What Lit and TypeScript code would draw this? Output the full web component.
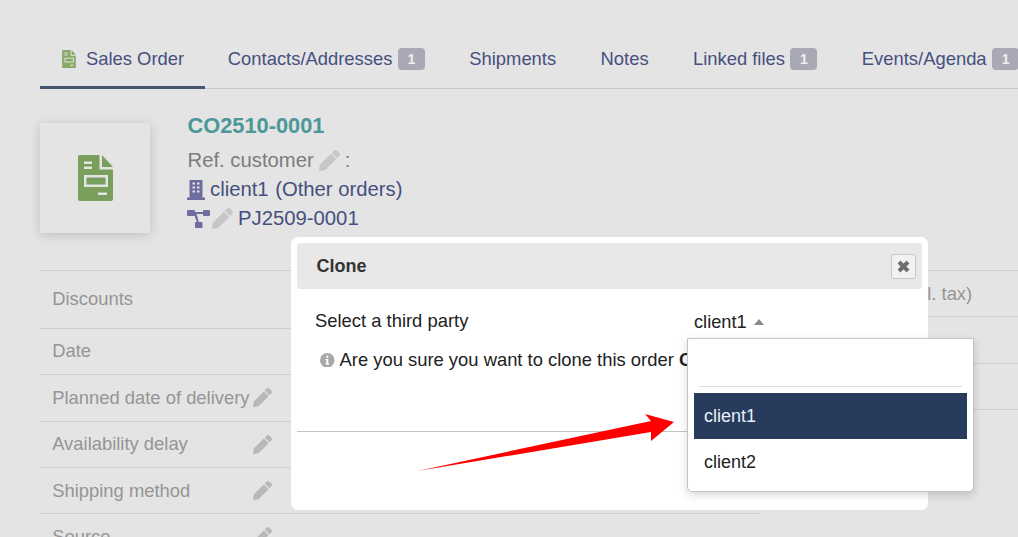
import { LitElement, html, css, svg } from "lit";
import { customElement } from "lit/decorators.js";

const pencilPath = "M497.9 142.1l-46.1 46.1c-4.7 4.7-12.3 4.7-17 0l-111-111c-4.7-4.7-4.7-12.3 0-17l46.1-46.1c18.7-18.7 49.1-18.7 67.9 0l60.1 60.1c18.8 18.7 18.8 49.1 0 67.9zM284.2 99.8L21.6 362.4.4 483.9c-2.9 16.4 11.4 30.6 27.8 27.8l121.5-21.3 262.6-262.6c4.7-4.7 4.7-12.3 0-17l-111-111c-4.8-4.7-12.4-4.7-17.1 0z";

const pencil = () => html`<svg class="pencil" viewBox="0 0 512 512"><path d=${pencilPath}></path></svg>`;

const docIcon = (cls: string) => html`<svg class=${cls} viewBox="0 0 35 46">
  <path fill-rule="evenodd" d="M2 0H21.5V14.5H35V44a2 2 0 0 1-2 2H2a2 2 0 0 1-2-2V2a2 2 0 0 1 2-2Z
    M6 6.5V9H14V6.5Z M6 11.5V14H14V11.5Z M20 37.5V40H29V37.5Z
    M6 20V32H30V20Z M8.5 22.5H27.5V29.5H8.5Z"></path>
  <path d="M24 0L35 12H24Z"></path>
</svg>`;

const buildingIcon = html`<svg class="ico-building" viewBox="0 0 18 20">
  <path fill-rule="evenodd" d="M2.5 0H15.5V17.5H18V20H0V17.5H2.5Z
    M5.5 2.5V4.5H8V2.5Z M10 2.5V4.5H12.5V2.5Z M5.5 6.5V8.5H8V6.5Z M10 6.5V8.5H12.5V6.5Z M5.5 10.5V12.5H8V10.5Z M10 10.5V12.5H12.5V10.5Z"></path>
</svg>`;

const projectIcon = html`<svg class="ico-project" viewBox="0 0 23 18">
  <rect x="0" y="0" width="8" height="6" rx="0.8"></rect>
  <rect x="16" y="0" width="7" height="6" rx="0.8"></rect>
  <rect x="8" y="12" width="7.5" height="6" rx="0.8"></rect>
  <path d="M7 2H17V4H9.6L12 12.5H10L7.4 5.5Z"></path>
</svg>`;

const arrow = svg`<polygon points="417.5,471 651,421 645,414 674,422 651,441 651,432" fill="#fe0000"></polygon>`;

const leftRows = [
  { label: "Discounts", cls: "tall up", edit: false },
  { label: "Date", cls: "up", edit: false },
  { label: "Planned date of delivery", cls: "", edit: true },
  { label: "Availability delay", cls: "", edit: true },
  { label: "Shipping method", cls: "down", edit: true },
  { label: "Source", cls: "", edit: true },
];

@customElement("app-root")
export class AppRoot extends LitElement {
  static styles = css`
    :host {
      display: block;
      position: relative;
      width: 1018px;
      height: 537px;
      overflow: hidden;
      background: #e4e4e4;
      font-family: "Liberation Sans", Arial, sans-serif;
      font-size: 18.4px;
      color: #222;
    }
    .page { padding: 40px 0 0 40px; white-space: nowrap; }
    .tabs {
      display: flex;
      height: 48px;
      border-bottom: 1px solid #c8c8c8;
      align-items: stretch;
    }
    .tab {
      display: flex;
      align-items: center;
      gap: 5.5px;
      padding: 0 22.2px 10px;
      color: #46507f;
      font-size: 18.4px;
      flex: none;
    }
    .tab.active {
      border-bottom: 3px solid #465670;
      margin-bottom: -1px;
      padding: 0 21px 8px 22px;
      gap: 10px;
    }
    .tab.lead { padding-left: 22.7px; }
    .ico-tab { width: 14px; height: 18px; fill: #8aa868; flex: none; }
    .badge {
      width: 27px;
      height: 22px;
      border-radius: 4px;
      background: #a9a9b5;
      color: #eee;
      font-size: 14px;
      font-weight: bold;
      display: flex;
      align-items: center;
      justify-content: center;
      flex: none;
    }
    .head { display: flex; padding-top: 34px; gap: 38px; }
    .avatar {
      width: 110px;
      height: 110px;
      flex: none;
      display: flex;
      align-items: center;
      justify-content: center;
      background: #e4e4e4;
      box-shadow: 0 2px 10px rgba(0, 0, 0, 0.17);
    }
    .ico-doc { width: 35px; height: 46px; fill: #7a9f5c; }
    .info { display: flex; flex-direction: column; margin-top: -10px; }
    .title { font-size: 21.8px; font-weight: bold; color: #4c9898; line-height: 25px; margin-bottom: 10px; margin-left: -0.5px; }
    .line { display: flex; align-items: center; height: 29px; font-size: 20.3px; color: #46507f; gap: 5px; }
    .line.muted { color: #7c7c7c; height: 25px; margin-bottom: 2px; margin-left: -0.5px; }
    .line.proj { gap: 0; margin-left: -1px; }
    .line.proj .pencil { margin: 0 5px 0 2px; }
    .other { margin-left: 1.5px; }
    .pencil { width: 21px; height: 21px; fill: #c6c6c6; flex: none; }
    .ico-building { width: 18px; height: 20px; fill: #6d6e9e; flex: none; margin-left: -1px; }
    .ico-project { width: 23px; height: 18px; fill: #6d6e9e; flex: none; }
    .tables { display: flex; margin-top: 37px; }
    .col-left { width: 720px; flex: none; }
    .col-right { flex: 1; margin-left: 20px; }
    .row {
      display: flex;
      align-items: center;
      height: 46.25px;
      border-top: 1px solid #cdcdcd;
      padding-left: 12.2px;
      color: #959595;
      box-sizing: border-box;
    }
    .row.tall { height: 58px; }
    .row.up { padding-bottom: 2px; }
    .row.down span { padding-top: 2px; }
    .cell-label { width: 220px; display: flex; justify-content: space-between; align-items: center; }
    .row .pencil { width: 19px; height: 19px; fill: #b8b8b8; }
    .row-r { height: 46.3px; border-top: 1px solid #cdcdcd; box-sizing: border-box; padding: 12px 0 0 44px; color: #959595; }

    .dialog {
      position: absolute;
      left: 291px;
      top: 237px;
      width: 637px;
      height: 273px;
      padding: 6px;
      box-sizing: border-box;
      background: #fff;
      border-radius: 7px;
      white-space: nowrap;
      overflow: hidden;
      display: flex;
      flex-direction: column;
    }
    .bar {
      height: 46px;
      flex: none;
      background: #e8e8e8;
      border-radius: 3px;
      display: flex;
      align-items: center;
      justify-content: space-between;
      padding: 0 6px 0 19.5px;
      font-size: 18px;
      font-weight: bold;
      color: #333;
    }
    .close {
      width: 25px;
      height: 25px;
      box-sizing: border-box;
      border: 1px solid #c6c6c6;
      border-radius: 3px;
      background: #f2f2f2;
      display: flex;
      align-items: center;
      justify-content: center;
    }
    .close svg { width: 13px; height: 13px; stroke: #6e6e6e; stroke-width: 4; }
    .select-row { display: flex; align-items: center; padding: 20px 0 0 18px; height: 24px; }
    .select-label { width: 379px; }
    .select-val { display: flex; align-items: center; gap: 7px; padding-top: 2px; font-size: 18.2px; }
    .tri { width: 10px; height: 6px; fill: #8a8a8a; }
    .confirm { display: flex; align-items: center; gap: 5px; padding: 15px 0 0 23px; height: 24px; }
    .ico-info { width: 14.5px; height: 14.5px; flex: none; }
    .sep { margin-top: 59px; border-top: 1px solid #c4c4c4; }

    .drop {
      position: absolute;
      left: 687px;
      top: 338px;
      width: 287px;
      height: 154px;
      box-sizing: border-box;
      background: #fff;
      border: 1px solid #c4c4c4;
      border-radius: 0 0 5px 5px;
      box-shadow: 0 3px 9px rgba(0, 0, 0, 0.16);
      padding: 47px 6px 0;
      display: flex;
      flex-direction: column;
      font-size: 18px;
    }
    .drop-div { margin: 0 5px 6px; border-top: 1px solid #dcdcdc; }
    .opt { height: 46px; flex: none; display: flex; align-items: center; padding-left: 10px; }
    .opt.on { background: #273c5c; color: #e8eef5; }
    .overlay { position: absolute; left: 0; top: 0; width: 1018px; height: 537px; pointer-events: none; }
  `;

  render() {
    return html`
      <div class="page">
        <div class="tabs">
          <div class="tab active">${docIcon("ico-tab")}Sales Order</div>
          <div class="tab lead">Contacts/Addresses<span class="badge">1</span></div>
          <div class="tab">Shipments</div>
          <div class="tab">Notes</div>
          <div class="tab">Linked files<span class="badge">1</span></div>
          <div class="tab">Events/Agenda<span class="badge">1</span></div>
        </div>
        <div class="head">
          <div class="avatar">${docIcon("ico-doc")}</div>
          <div class="info">
            <div class="title">CO2510-0001</div>
            <div class="line muted">Ref. customer ${pencil()} :</div>
            <div class="line">${buildingIcon}client1 <span class="other">(Other orders)</span></div>
            <div class="line proj">${projectIcon}${pencil()}PJ2509-0001</div>
          </div>
        </div>
        <div class="tables">
          <div class="col-left">
            ${leftRows.map(
              (r) => html`<div class="row ${r.cls}">
                <div class="cell-label"><span>${r.label}</span>${r.edit ? pencil() : ""}</div>
              </div>`
            )}
          </div>
          <div class="col-right">
            <div class="row-r">Amount (excl. tax)</div>
            <div class="row-r"></div>
            <div class="row-r"></div>
            <div class="row-r"></div>
          </div>
        </div>
      </div>

      <div class="dialog">
        <div class="bar">
          <span>Clone</span>
          <span class="close"><svg viewBox="0 0 13 13"><path d="M2 2L11 11M11 2L2 11"></path></svg></span>
        </div>
        <div class="select-row">
          <span class="select-label">Select a third party</span>
          <span class="select-val">client1 <svg class="tri" viewBox="0 0 10 6"><path d="M5 0L10 6H0Z"></path></svg></span>
        </div>
        <div class="confirm">
          <svg class="ico-info" viewBox="0 0 14 14">
            <circle cx="7" cy="7" r="7" fill="#a8a8a8"></circle>
            <rect x="6" y="2.6" width="2" height="2" fill="#fff"></rect>
            <path d="M5.4 5.8H8V10.2H8.8V11.4H5.4V10.2H6.1V7H5.4Z" fill="#fff"></path>
          </svg>
          <span>Are you sure you want to clone this order <b>CO2510-0001</b> ?</span>
        </div>
        <div class="sep"></div>
      </div>

      <div class="drop">
        <div class="drop-div"></div>
        <div class="opt on">client1</div>
        <div class="opt">client2</div>
      </div>

      <svg class="overlay" viewBox="0 0 1018 537">${arrow}</svg>
    `;
  }
}
